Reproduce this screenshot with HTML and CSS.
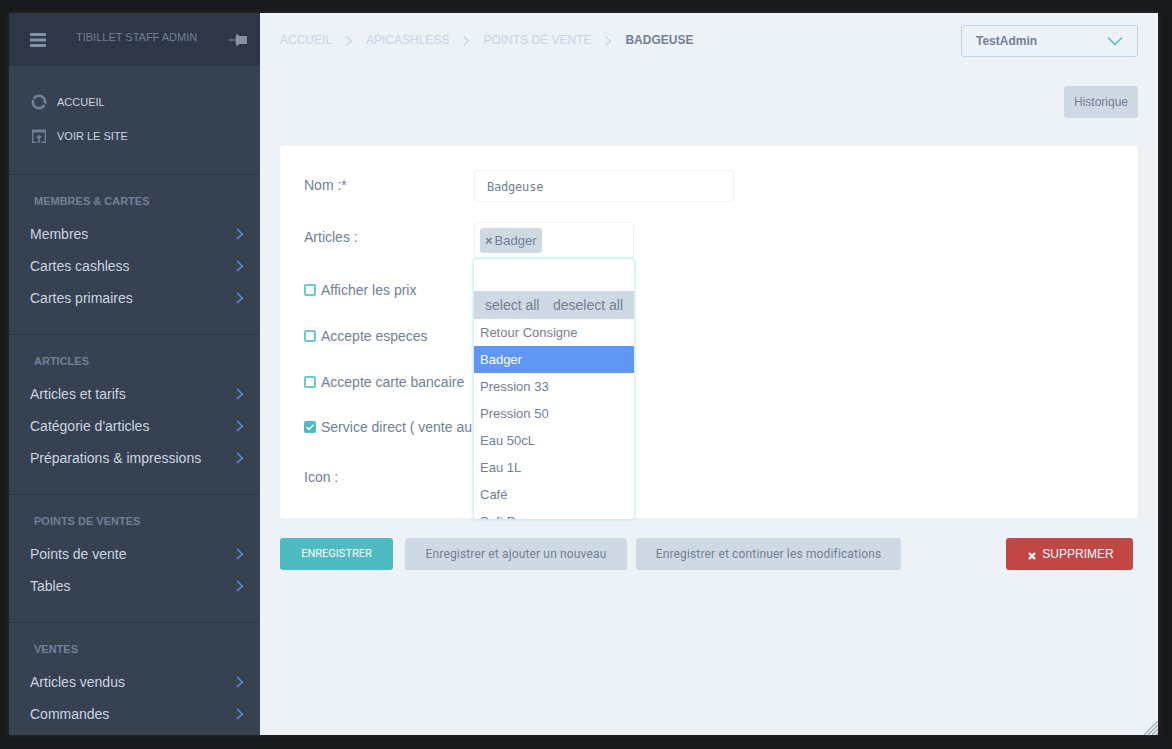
FILE: index.html
```html
<!DOCTYPE html>
<html>
	<head>
		<title>TiBillet Staff Admin</title>
		<meta charset="utf-8">
		<link rel="stylesheet" href="styles.css">
	</head>
	<body>
		<div class="window">
			<aside class="sidebar">
				<div class="side-head">
					<svg class="burger" width="16" height="14" viewBox="0 0 16 14"><path d="M0 0h16v3H0zM0 5.500h16v3H0zM0 11h16v3H0z"/></svg>
					<span class="brand">TIBILLET STAFF ADMIN</span>
					<svg class="pin" width="18" height="14" viewBox="0 0 18 14"><path d="M0 6.500h6.500L7.500 .5 10.500 3H18v8h-7.500l-3 2.500-1-6H0z"/></svg>
				</div>
				<div class="side-top">
					<a class="top-link">
						<svg width="16" height="16" viewBox="0 0 16 16"><circle class="ring" cx="8" cy="8" r="6.200" stroke-dasharray="18.300 1.200" stroke-dashoffset="-3" /></svg>
						ACCUEIL
					</a>
					<a class="top-link">
						<svg width="16" height="16" viewBox="0 0 16 16"><path d="M1 1.500h14v13.500H10v-1.300h3.700V4.500H2.300v9.200H6V15H1z"/><path d="M8 6.500l3 3.200H8.800V15H7.200V9.700H5z"/></svg>
						VOIR LE SITE
					</a>
				</div>
				<section class="side-group">
					<h3>MEMBRES &amp; CARTES</h3>
					<a class="side-item">Membres <svg class="chev" width="8" height="12" viewBox="0 0 8 12"><path d="M1 1l5.500 5L1 11"/></svg></a>
					<a class="side-item">Cartes cashless <svg class="chev" width="8" height="12" viewBox="0 0 8 12"><path d="M1 1l5.500 5L1 11"/></svg></a>
					<a class="side-item">Cartes primaires <svg class="chev" width="8" height="12" viewBox="0 0 8 12"><path d="M1 1l5.500 5L1 11"/></svg></a>
				</section>
				<section class="side-group">
					<h3>ARTICLES</h3>
					<a class="side-item">Articles et tarifs <svg class="chev" width="8" height="12" viewBox="0 0 8 12"><path d="M1 1l5.500 5L1 11"/></svg></a>
					<a class="side-item">Catégorie d'articles <svg class="chev" width="8" height="12" viewBox="0 0 8 12"><path d="M1 1l5.500 5L1 11"/></svg></a>
					<a class="side-item">Préparations &amp; impressions <svg class="chev" width="8" height="12" viewBox="0 0 8 12"><path d="M1 1l5.500 5L1 11"/></svg></a>
				</section>
				<section class="side-group">
					<h3>POINTS DE VENTES</h3>
					<a class="side-item">Points de vente <svg class="chev" width="8" height="12" viewBox="0 0 8 12"><path d="M1 1l5.500 5L1 11"/></svg></a>
					<a class="side-item">Tables <svg class="chev" width="8" height="12" viewBox="0 0 8 12"><path d="M1 1l5.500 5L1 11"/></svg></a>
				</section>
				<section class="side-group">
					<h3>VENTES</h3>
					<a class="side-item">Articles vendus <svg class="chev" width="8" height="12" viewBox="0 0 8 12"><path d="M1 1l5.500 5L1 11"/></svg></a>
					<a class="side-item">Commandes <svg class="chev" width="8" height="12" viewBox="0 0 8 12"><path d="M1 1l5.500 5L1 11"/></svg></a>
				</section>
			</aside>

			<main class="content">
				<div class="topbar">
					<nav class="crumbs">
						<a>ACCUEIL</a>
						<svg class="crumb-sep" width="8" height="12" viewBox="0 0 8 12"><path d="M1.500 1.500L6.500 6l-5 4.500"/></svg>
						<a>APICASHLESS</a>
						<svg class="crumb-sep" width="8" height="12" viewBox="0 0 8 12"><path d="M1.500 1.500L6.500 6l-5 4.500"/></svg>
						<a>POINTS DE VENTE</a>
						<svg class="crumb-sep" width="8" height="12" viewBox="0 0 8 12"><path d="M1.500 1.500L6.500 6l-5 4.500"/></svg>
						<b>BADGEUSE</b>
					</nav>
					<div class="user-select">
						TestAdmin
						<svg width="16" height="10" viewBox="0 0 16 10"><path d="M1 1.500l7 7 7-7"/></svg>
					</div>
				</div>

				<div class="tools">
					<a class="history">Historique</a>
				</div>

				<form class="card">
					<div class="row row-name">
						<label>Nom :*</label>
						<div class="text-input">Badgeuse</div>
					</div>
					<div class="row row-articles">
						<label>Articles :</label>
						<div class="multi">
							<div class="multi-box">
								<span class="tag"><i>×</i>Badger</span>
							</div>
							<div class="dropdown">
								<div class="dd-search"></div>
								<div class="dd-actions"><span>select all</span><span>deselect all</span></div>
								<ul class="dd-list">
									<li>Retour Consigne</li>
									<li class="selected">Badger</li>
									<li>Pression 33</li>
									<li>Pression 50</li>
									<li>Eau 50cL</li>
									<li>Eau 1L</li>
									<li>Café</li>
									<li>Soft P</li>
								</ul>
							</div>
						</div>
					</div>
					<div class="check check-1"><span class="box"></span>Afficher les prix</div>
					<div class="check check-2"><span class="box"></span>Accepte especes</div>
					<div class="check check-3"><span class="box"></span>Accepte carte bancaire</div>
					<div class="check check-4">
						<span class="box on"><svg width="12" height="12" viewBox="0 0 12 12"><path d="M2.500 6.200l2.500 2.300 4.500-4.700"/></svg></span>Service direct ( vente au
					</div>
					<div class="row row-icon"><label>Icon :</label></div>
				</form>

				<div class="actions">
					<a class="btn btn-save">ENREGISTRER</a>
					<a class="btn btn-add">Enregistrer et ajouter un nouveau</a>
					<a class="btn btn-continue">Enregistrer et continuer les modifications</a>
					<a class="btn-delete">
						<svg width="8" height="8" viewBox="0 0 8 8"><path d="M1 1l6 6M7 1L1 7"/></svg>
						SUPPRIMER
					</a>
				</div>

				<svg class="grip" width="14" height="14" viewBox="0 0 14 14"><path d="M14 0L0 14M14 4L4 14M14 8l-6 6M14 12l-2 2"/></svg>
			</main>
		</div>
	</body>
</html>
```

FILE: styles.css
```css
html, body {
    height: 100%;
    margin: 0;
    padding: 0;
}

body {
    background: #18191b;
    font-family: "Liberation Sans", Arial, sans-serif;
    color: #718096;
    overflow: hidden;
    box-sizing: border-box;
    padding: 13px 14px 14px 9px;
}

a {
    color: inherit;
    text-decoration: none;
}

.window {
    display: flex;
    height: 100%;
    box-shadow: 0 0 6px rgba(255, 255, 255, 0.1);
    overflow: hidden;
}

/* sidebar */
.sidebar {
    width: 251px;
    flex: none;
    background: #364152;
    overflow: hidden;
}

.side-head {
    height: 53px;
    background: #2d3748;
    display: flex;
    align-items: flex-start;
    box-sizing: border-box;
    padding: 20px 13px 0 21px;
}

.burger {
    fill: #8492a6;
}

.brand {
    flex: 1;
    margin: -2px 0 0 30px;
    font-size: 11px;
    line-height: 13px;
    color: #718096;
    white-space: nowrap;
}

.pin {
    fill: #8091a8;
    margin-top: 0;
}

.side-top {
    height: 109px;
    box-sizing: border-box;
    padding-top: 19px;
    border-bottom: 1px solid #2d3748;
}

.top-link {
    display: flex;
    align-items: center;
    height: 34px;
    padding-left: 22px;
    gap: 10px;
    font-size: 11px;
    color: #cbd5e0;
}

.top-link svg {
    fill: #718096;
}

.top-link .ring {
    fill: none;
    stroke: #718096;
    stroke-width: 2.600;
}

.side-group {
    box-sizing: border-box;
    height: 160px;
    padding: 20px 0 0;
    border-bottom: 1px solid #2d3748;
}

.side-group:nth-of-type(3) {
    height: 128px;
}

.side-group:last-child {
    border-bottom: none;
}

.side-group h3 {
    margin: 0 0 10px 25px;
    font-size: 11px;
    line-height: 13px;
    font-weight: bold;
    color: #718096;
}

.side-item {
    display: flex;
    align-items: center;
    justify-content: space-between;
    height: 32px;
    padding: 0 16px 0 21px;
    font-size: 14px;
    color: #cbd5e0;
}

.chev {
    fill: none;
    stroke: #5e8fe6;
    stroke-width: 1.500;
}

/* main column */
.content {
    position: relative;
    flex: 1;
    min-width: 0;
    background: #edf2f7;
    box-sizing: border-box;
    padding: 12px 20px 0;
}

.topbar {
    display: flex;
    justify-content: space-between;
    align-items: flex-start;
}

.crumbs {
    display: flex;
    align-items: center;
    height: 30px;
    font-size: 12px;
    color: #c5d5e6;
}

.crumbs b {
    color: #718096;
}

.crumb-sep {
    fill: none;
    stroke: #c5d5e6;
    stroke-width: 1.300;
    margin: 2px 13px 0 13px;
}

.user-select {
    width: 177px;
    height: 32px;
    box-sizing: border-box;
    border: 1px solid #bcd2e6;
    border-radius: 3px;
    padding: 0 14px;
    display: flex;
    align-items: center;
    justify-content: space-between;
    font-size: 12px;
    font-weight: bold;
    color: #718096;
}

.user-select svg {
    fill: none;
    stroke: #4dbbc1;
    stroke-width: 1.400;
}

.tools {
    display: flex;
    justify-content: flex-end;
    margin-top: 29px;
}

.history {
    width: 74px;
    height: 32px;
    line-height: 32px;
    text-align: center;
    background: #cfd9e4;
    border-radius: 3px;
    font-size: 12px;
}

.card {
    background: #fff;
    border-radius: 4px;
    margin-top: 28px;
    height: 372px;
    box-sizing: border-box;
    padding: 24px;
    font-size: 14px;
}

.row {
    display: flex;
}

.row label {
    width: 170px;
    flex: none;
    line-height: 30px;
}

.text-input {
    width: 260px;
    height: 32px;
    line-height: 32px;
    box-sizing: border-box;
    border: 1px solid #edf2f7;
    border-radius: 3px;
    padding-left: 12px;
    font-family: "DejaVu Sans Mono", monospace;
    font-size: 12px;
    letter-spacing: -0.200px;
}

.row-articles {
    margin-top: 20px;
}

.multi {
    position: relative;
    width: 160px;
}

.multi-box {
    height: 37px;
    box-sizing: border-box;
    border: 1px solid #edf2f7;
    border-radius: 3px;
    padding: 5px;
}

.tag {
    display: inline-block;
    height: 25px;
    line-height: 25px;
    padding: 0 5px;
    background: #cfd9e4;
    border-radius: 3px;
    font-size: 13px;
}

.tag i {
    font-style: normal;
    font-weight: bold;
    margin-right: 2px;
}

.dropdown {
    position: absolute;
    top: 37px;
    left: 0;
    width: 160px;
    height: 260px;
    background: #fff;
    border-radius: 3px;
    box-shadow: 0 0 3px 1px #bce8ea;
    overflow: hidden;
    z-index: 2;
}

.dd-search {
    height: 32px;
}

.dd-actions {
    height: 28px;
    line-height: 28px;
    background: #cfd9e4;
    display: flex;
    justify-content: space-between;
    padding: 0 11px;
}

.dd-list {
    list-style: none;
    margin: 0;
    padding: 0;
    font-size: 13px;
}

.dd-list li {
    height: 27px;
    line-height: 27px;
    padding-left: 6px;
}

.dd-list .selected {
    background: #6096f4;
    color: #fff;
}

.check {
    display: flex;
    align-items: center;
    height: 20px;
    white-space: nowrap;
}

.check-1 {
    margin-top: 21px;
}

.check-2,
.check-3 {
    margin-top: 26px;
}

.check-4 {
    margin-top: 25px;
}

.box {
    width: 12px;
    height: 12px;
    box-sizing: border-box;
    border: 2px solid #6cc6cb;
    border-radius: 2px;
    margin-right: 5px;
    display: flex;
    align-items: center;
    justify-content: center;
}

.box.on {
    background: #4dbbc1;
    border-color: #4dbbc1;
}

.box svg {
    flex: none;
    fill: none;
    stroke: #fff;
    stroke-width: 1.600;
}

.row-icon {
    margin-top: 25px;
}

.actions {
    display: flex;
    align-items: center;
    margin-top: 20px;
}

.btn {
    height: 32px;
    line-height: 32px;
    text-align: center;
    border-radius: 3px;
    font-family: Roboto, sans-serif;
    font-size: 12px;
    letter-spacing: 0.150px;
    background: #cfd9e4;
}

.btn-save {
    width: 113px;
    background: #4dbbc1;
    color: #fff;
    font-size: 11px;
    letter-spacing: 0;
}

.btn-add {
    width: 222px;
    margin-left: 12px;
}

.btn-continue {
    width: 265px;
    margin-left: 9px;
}

.btn-delete {
    margin-left: auto;
    margin-right: 5px;
    width: 127px;
    height: 32px;
    box-sizing: border-box;
    padding-left: 3px;
    background: #c24646;
    border-radius: 3px;
    color: #fff;
    font-size: 12px;
    display: flex;
    align-items: center;
    justify-content: center;
    gap: 6px;
}

.btn-delete svg {
    fill: none;
    stroke: #fff;
    stroke-width: 2.400;
    margin-top: 3px;
}

.grip {
    position: absolute;
    right: 0;
    bottom: 0;
    fill: none;
    stroke: #9aa3ad;
    stroke-width: 1.200;
}
```
